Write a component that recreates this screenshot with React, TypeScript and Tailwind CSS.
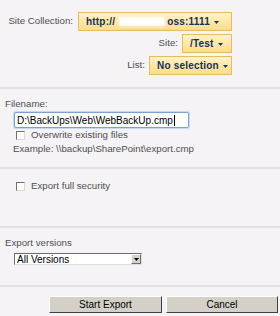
import React from "react"

const Caret = () => (
  <svg width="5" height="3" viewBox="0 0 5 3" className="ml-[4px] mt-[2px]">
    <path d="M0 0h5L2.5 3z" fill="#1b3563" />
  </svg>
)

type PickerProps = {
  children: React.ReactNode
  width: string
}

const Picker = ({ children, width }: PickerProps) => (
  <div className={`flex h-[19px] items-center border border-[#e2bd62] bg-gradient-to-b from-[#fff2c6] to-[#fcdd88] pl-[7px] text-[10px] font-bold tracking-[0.2px] text-[#14305f] ${width}`}>
    {children}
    <Caret />
  </div>
)

const Check = () => (
  <div className="h-[9px] w-[9px] border-t border-l border-[#6f6f6f] border-r border-b border-r-[#d8d8d8] border-b-[#d8d8d8] bg-white" />
)

const Rule = () => <div className="h-[2px] w-full bg-[#e4e1e4]" />

const App = () => {
  return (
    <div
      className="flex h-[316px] w-[280px] flex-col bg-[#f6f3f6] text-[9.7px] text-[#4f4f4f]"
      style={{ fontFamily: '"Liberation Sans", Arial, sans-serif' }}
    >
      {/* location pickers */}
      <div className="flex h-[87px] flex-col items-end gap-[3px] pt-[12px] pr-[48px]">
        <div className="flex items-center gap-[5px]">
          <span>Site Collection:</span>
          <Picker width="w-[154px]">
            <span>http://</span>
            <span className="ml-[4px] mr-[2px] inline-block h-[9px] w-[46px] bg-white blur-[1px]" />
            <span>oss:1111</span>
          </Picker>
        </div>
        <div className="flex items-center gap-[4px]">
          <span>Site:</span>
          <Picker width="w-[50px]">
            <span>/Test</span>
          </Picker>
        </div>
        <div className="flex items-center gap-[4px]">
          <span>List:</span>
          <Picker width="w-[83px]">
            <span>No selection</span>
          </Picker>
        </div>
      </div>
      <Rule />

      {/* filename */}
      <div className="flex h-[78px] flex-col pt-[9px] pl-[5px]">
        <span className="leading-[12px]">Filename:</span>
        <div className="mt-[2px] ml-[9px] flex h-[16px] w-[175px] items-center rounded-[2px] border border-[#7da2ce] bg-white px-[2px] text-[10px] text-black shadow-[0_0_0_1px_#c5d9f1]">
          D:\BackUps\Web\WebBackUp.cmp<span className="ml-[1px] h-[11px] w-[1px] bg-black" />
        </div>
        <div className="mt-[3px] ml-[11px] flex h-[9px] items-center gap-[6px]">
          <Check />
          <span>Overwrite existing files</span>
        </div>
        <span className="mt-[3px] ml-[8px] leading-[12px]">Example: \\backup\SharePoint\export.cmp</span>
      </div>
      <Rule />

      {/* security */}
      <div className="flex h-[57px] flex-col pt-[13px] pl-[16px]">
        <div className="flex h-[9px] items-center gap-[6px]">
          <Check />
          <span>Export full security</span>
        </div>
      </div>
      <Rule />

      {/* versions */}
      <div className="flex h-[57px] flex-col pt-[9px] pl-[5px]">
        <span className="leading-[12px]">Export versions</span>
        <div className="mt-[4px] ml-[9px] flex h-[12px] w-[128px] items-center justify-between border-t border-l border-[#6c6c6c] border-r border-b border-r-[#e0e0e0] border-b-[#e0e0e0] bg-white pl-[2px] text-[10px] text-black">
          <span>All Versions</span>
          <div className="flex h-[10px] w-[10px] items-center justify-center border border-t-white border-l-white border-r-[#6c6c6c] border-b-[#6c6c6c] bg-[#d6d3ce]">
            <svg width="5" height="3" viewBox="0 0 5 3">
              <path d="M0 0h5L2.5 3z" fill="#000" />
            </svg>
          </div>
        </div>
      </div>
      <Rule />

      {/* actions */}
      <div className="flex justify-end gap-[4px] pt-[9px] pr-[2px] text-[10px] text-black">
        <button className="h-[17px] w-[113px] border border-t-white border-l-white border-r-[#404040] border-b-[#404040] bg-[#d4d0c8]">
          Start Export
        </button>
        <button className="h-[17px] w-[112px] border border-t-white border-l-white border-r-[#404040] border-b-[#404040] bg-[#d4d0c8]">
          Cancel
        </button>
      </div>
    </div>
  )
}

export default App
